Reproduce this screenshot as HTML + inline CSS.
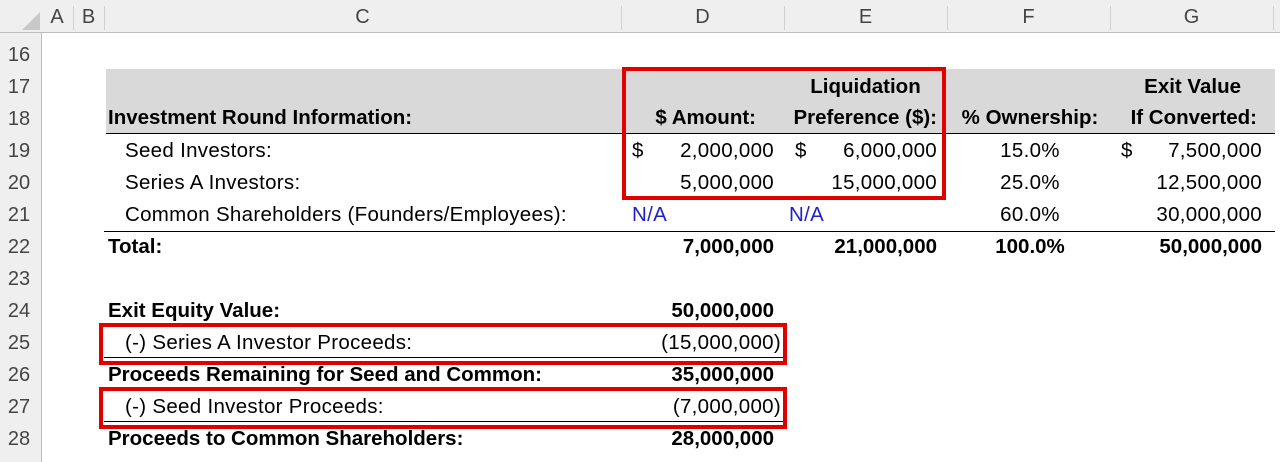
<!DOCTYPE html>
<html><head><meta charset="utf-8"><style>
body{margin:0;width:1280px;height:462px;overflow:hidden;background:#fff;font-family:"Liberation Sans",Arial,sans-serif;position:relative}
.a{position:absolute;white-space:nowrap;font-size:20.5px;letter-spacing:0.3px;line-height:32px;color:#000}
.b{font-weight:bold;letter-spacing:0}
.r{text-align:right}
.c{text-align:center}
.blue{color:#1f1fd0}
.hd{position:absolute;top:0;left:0;width:1280px;height:32px;background:#efefef;border-bottom:1px solid #bdbdbd}
.rh{position:absolute;top:33px;left:0;width:41px;height:429px;background:#efefef;border-right:1px solid #bdbdbd}
.cl{position:absolute;top:4px;font-size:20px;color:#444;line-height:26px;text-align:center}
.sep{position:absolute;top:6px;width:1px;height:24px;background:#d0d0d0}
.rn{position:absolute;left:0;width:38px;text-align:center;font-size:20px;color:#444;line-height:32px}
.box{position:absolute;border:4px solid #e00000;box-sizing:border-box}
.ln{position:absolute;height:1px;background:#000}
</style></head><body>
<div class="hd"></div>
<div class="cl" style="left:41px;width:32px">A</div>
<div class="cl" style="left:73px;width:31px">B</div>
<div class="cl" style="left:104px;width:517px">C</div>
<div class="cl" style="left:621px;width:163px">D</div>
<div class="cl" style="left:784px;width:163px">E</div>
<div class="cl" style="left:947px;width:163px">F</div>
<div class="cl" style="left:1110px;width:163px">G</div>
<div class="sep" style="left:73px"></div><div class="sep" style="left:104px"></div><div class="sep" style="left:621px"></div><div class="sep" style="left:784px"></div><div class="sep" style="left:947px"></div><div class="sep" style="left:1110px"></div><div class="sep" style="left:1273px"></div>
<svg style="position:absolute;left:22px;top:12px" width="18" height="18"><polygon points="18,0 18,18 0,18" fill="#c8c8c8"/></svg>
<div class="rh"></div>
<div class="rn" style="top:39px">16</div>
<div class="rn" style="top:71px">17</div>
<div class="rn" style="top:103px">18</div>
<div class="rn" style="top:135px">19</div>
<div class="rn" style="top:167px">20</div>
<div class="rn" style="top:199px">21</div>
<div class="rn" style="top:231px">22</div>
<div class="rn" style="top:263px">23</div>
<div class="rn" style="top:295px">24</div>
<div class="rn" style="top:327px">25</div>
<div class="rn" style="top:359px">26</div>
<div class="rn" style="top:391px">27</div>
<div class="rn" style="top:423px">28</div>

<div style="position:absolute;left:106px;top:69px;width:1169px;height:64px;background:#d9d9d9"></div>
<div class="ln" style="left:106px;top:133px;width:1169px"></div>
<div class="ln" style="left:104px;top:231px;width:1171px"></div>
<div class="ln" style="left:104px;top:357px;width:679px"></div>
<div class="ln" style="left:104px;top:421px;width:679px"></div>

<div class="a b c" style="left:784px;width:163px;top:71px">Liquidation</div>
<div class="a b r" style="left:1080px;width:161px;top:71px">Exit Value</div>
<div class="a b" style="left:108px;top:102px">Investment Round Information:</div>
<div class="a b r" style="left:600px;width:156px;top:102px">$ Amount:</div>
<div class="a b r" style="left:760px;width:177px;top:102px">Preference ($):</div>
<div class="a b c" style="left:940px;width:180px;top:102px">% Ownership:</div>
<div class="a b r" style="left:1100px;width:157px;top:102px">If Converted:</div>

<div class="a" style="left:125px;top:135px">Seed Investors:</div>
<div class="a" style="left:632px;top:135px">$</div>
<div class="a r" style="left:650px;width:124px;top:135px">2,000,000</div>
<div class="a" style="left:795px;top:135px">$</div>
<div class="a r" style="left:813px;width:124px;top:135px">6,000,000</div>
<div class="a c" style="left:950px;width:160px;top:135px">15.0%</div>
<div class="a" style="left:1121px;top:135px">$</div>
<div class="a r" style="left:1130px;width:132px;top:135px">7,500,000</div>

<div class="a" style="left:125px;top:167px">Series A Investors:</div>
<div class="a r" style="left:650px;width:124px;top:167px">5,000,000</div>
<div class="a r" style="left:800px;width:137px;top:167px">15,000,000</div>
<div class="a c" style="left:950px;width:160px;top:167px">25.0%</div>
<div class="a r" style="left:1120px;width:142px;top:167px">12,500,000</div>

<div class="a" style="left:125px;top:199px">Common Shareholders (Founders/Employees):</div>
<div class="a blue" style="left:632px;top:199px">N/A</div>
<div class="a blue" style="left:789px;top:199px">N/A</div>
<div class="a c" style="left:950px;width:160px;top:199px">60.0%</div>
<div class="a r" style="left:1120px;width:142px;top:199px">30,000,000</div>

<div class="a b" style="left:108px;top:231px">Total:</div>
<div class="a b r" style="left:650px;width:124px;top:231px">7,000,000</div>
<div class="a b r" style="left:800px;width:137px;top:231px">21,000,000</div>
<div class="a b c" style="left:950px;width:160px;top:231px">100.0%</div>
<div class="a b r" style="left:1120px;width:142px;top:231px">50,000,000</div>

<div class="a b" style="left:108px;top:295px">Exit Equity Value:</div>
<div class="a b r" style="left:630px;width:144px;top:295px">50,000,000</div>
<div class="a" style="left:125px;top:327px">(-) Series A Investor Proceeds:</div>
<div class="a r" style="left:620px;width:161px;top:327px">(15,000,000)</div>
<div class="a b" style="left:108px;top:359px">Proceeds Remaining for Seed and Common:</div>
<div class="a b r" style="left:630px;width:144px;top:359px">35,000,000</div>
<div class="a" style="left:125px;top:391px">(-) Seed Investor Proceeds:</div>
<div class="a r" style="left:620px;width:161px;top:391px">(7,000,000)</div>
<div class="a b" style="left:108px;top:423px">Proceeds to Common Shareholders:</div>
<div class="a b r" style="left:630px;width:144px;top:423px">28,000,000</div>

<div class="box" style="left:622px;top:67px;width:324px;height:133px"></div>
<div class="box" style="left:99px;top:323px;width:688px;height:42px"></div>
<div class="box" style="left:99px;top:387px;width:688px;height:42px"></div>
</body></html>
